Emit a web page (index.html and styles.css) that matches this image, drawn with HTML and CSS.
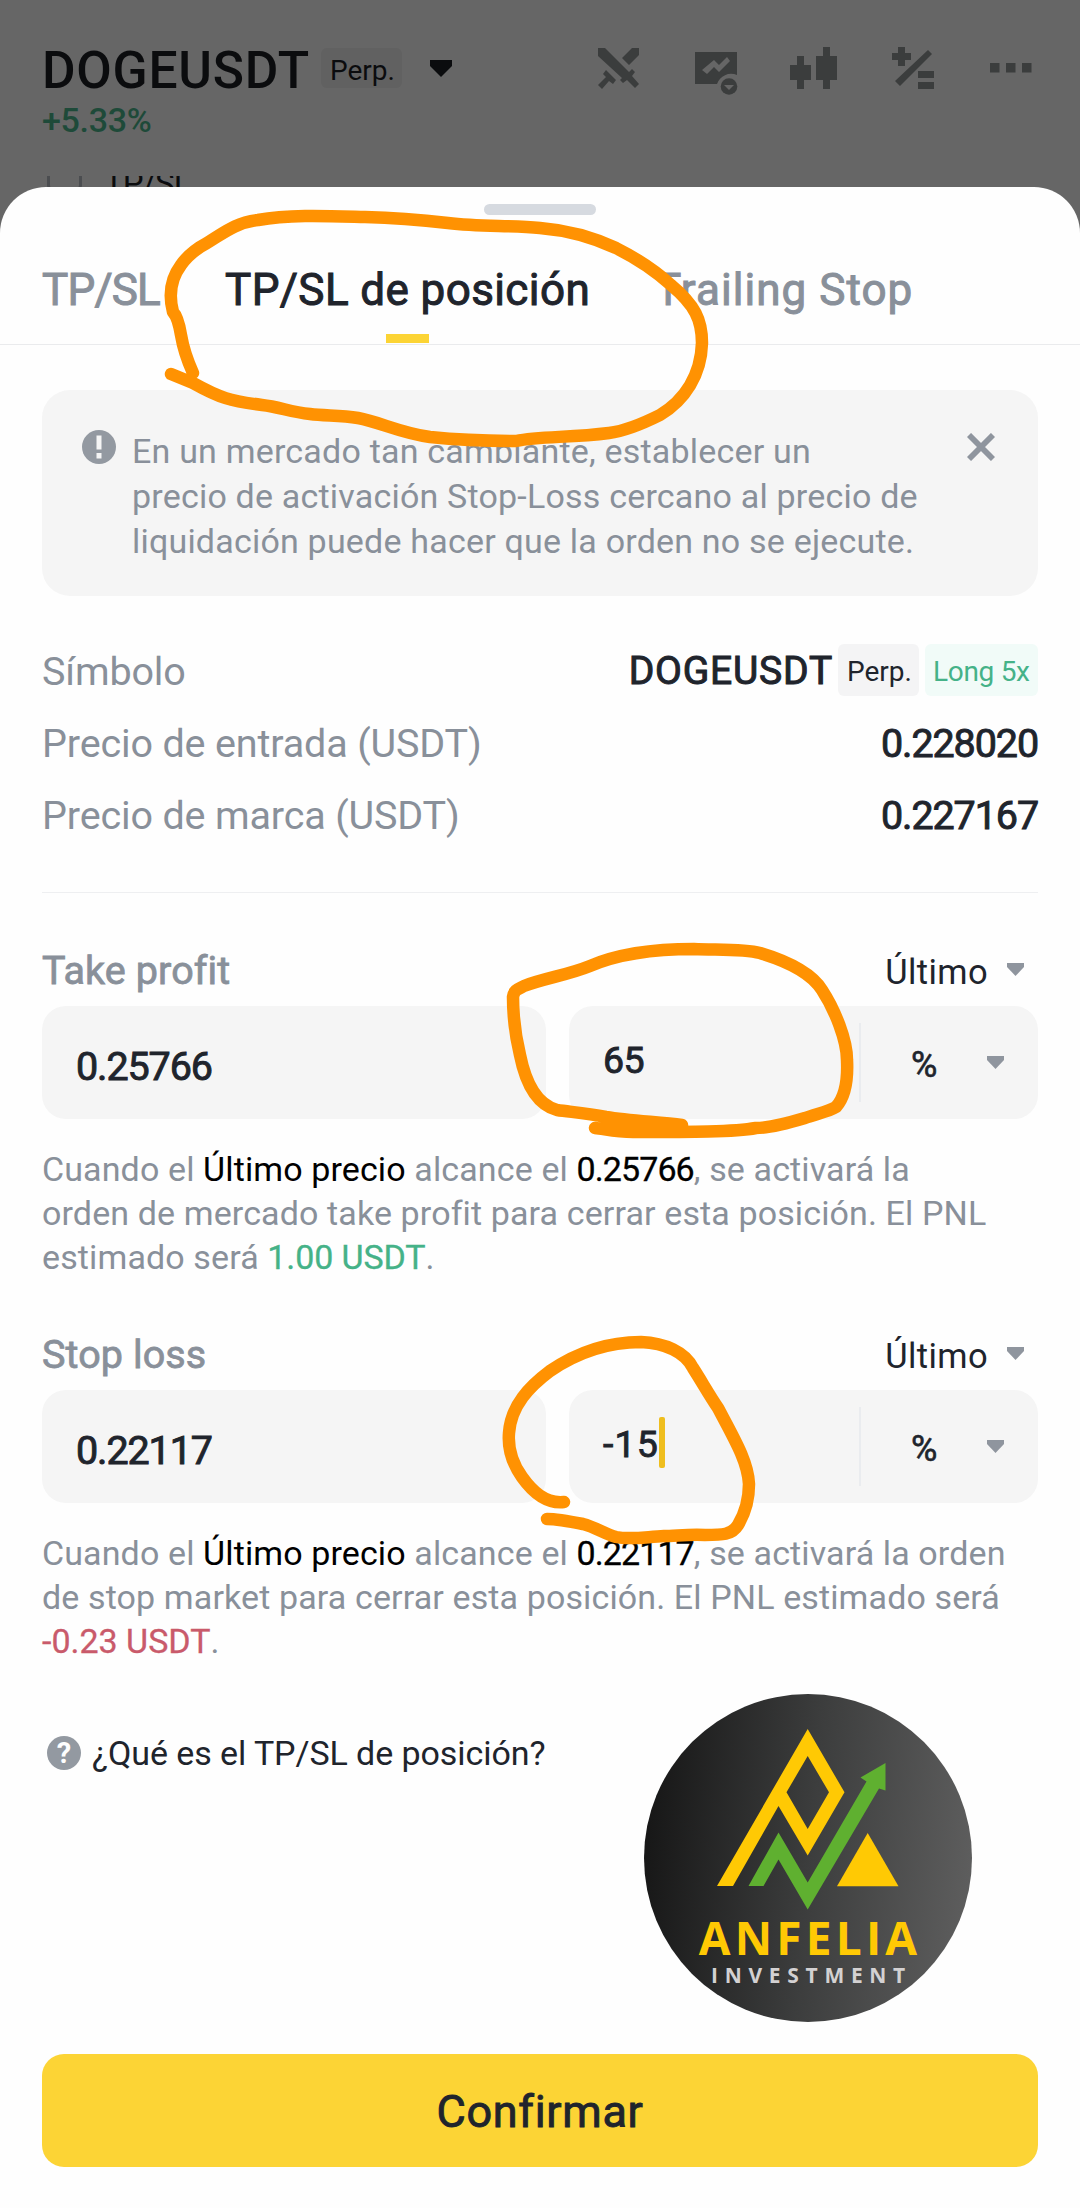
FILE: index.html
```html
<!DOCTYPE html>
<html lang="es">
<head>
  <meta charset="UTF-8">
  <meta name="viewport" content="width=device-width, initial-scale=1.0">
  <title>TP/SL de posición</title>
  <link rel="stylesheet" href="styles.css">
</head>
<body>
  <div class="header">
    <div class="header-row">
      <span class="pair">DOGEUSDT</span>
      <span class="badge badge-dim">Perp.</span>
      <svg class="pair-caret" width="22" height="17" viewBox="0 0 22 17"><path d="M0 0H22V6L11 17L0 6Z" fill="#0b0c0e"/></svg>
      <div class="header-icons">
        <svg width="42" height="44" viewBox="0 0 42 44">
          <g transform="translate(0 2)">
            <path d="M0 0h7L31 24l3-3 3 3-3 4 7 8-4 4-8-8-4 3-3-3 2-2L0 8zM34 0h7v7L31 17l-7-7zM8 22l10 10-3 4-4-3-7 8-4-4 8-8-3-3z"/>
          </g>
        </svg>
        <svg class="icon-chart" width="44" height="44" viewBox="0 0 44 44">
          <path fill-rule="evenodd" d="M1 6h42v23a15 15 0 0 0-20 9H1zM8 24l5 4 7-7 5 5 11-11-3-4-8 8-5-5z"/>
          <circle cx="35" cy="40.500" r="8.300"/>
          <path class="icon-hole" d="M30 39h10l-5 5z"/>
        </svg>
        <svg width="48" height="44" viewBox="0 0 48 44">
          <path d="M8 10h7v9h7v15h-7v9H8v-9H1V19h7zM34 1h7v9h7v24h-7v9h-7v-9h-7V10h7z"/>
        </svg>
        <svg width="44" height="44" viewBox="0 0 44 44">
          <path d="M7 1h7v6h6v7h-6v6H7v-6H1V7h6zM37 4l4 4L9 40l-5-5zM27 25h16v7H27zM27 36h16v7H27z"/>
        </svg>
        <svg width="44" height="44" viewBox="0 0 44 44">
          <path d="M1 17h9.500v9.500H1zM17 17h9.500v9.500H17zM33 17h9.500v9.500H33z"/>
        </svg>
      </div>
    </div>
    <div class="change">+5.33%</div>
    <div class="order-option">
      <span class="checkbox"></span>
      <span class="order-option-text">TP/SL</span>
    </div>
  </div>

  <div class="sheet">
    <div class="handle"></div>
    <div class="tabs">
      <div class="tab">TP/SL</div>
      <div class="tab tab-active">TP/SL de posición</div>
      <div class="tab tab-trailing">Trailing Stop</div>
    </div>

    <div class="content">
      <div class="alert">
        <svg class="alert-icon" width="34" height="34" viewBox="0 0 34 34">
          <circle cx="17" cy="17" r="17" fill="#9399a1"/>
          <path d="M14.500 5.500h5v14h-5zM14.500 23h5v5.500h-5z" fill="#f5f5f5"/>
        </svg>
        <p class="alert-text">En un mercado tan cambiante, establecer un<br>precio de activación Stop-Loss cercano al precio de<br>liquidación puede hacer que la orden no se ejecute.</p>
        <svg class="alert-close" width="28" height="28" viewBox="0 0 28 28"><path d="M2 2L26 26M26 2L2 26" stroke="#8f959e" stroke-width="5.800"/></svg>
      </div>

      <div class="info">
        <div class="info-row">
          <span class="info-label">Símbolo</span>
          <span class="symbol">DOGEUSDT</span>
          <span class="badge badge-perp">Perp.</span>
          <span class="badge badge-long">Long 5x</span>
        </div>
        <div class="info-row">
          <span class="info-label">Precio de entrada (USDT)</span>
          <span class="number">0.228020</span>
        </div>
        <div class="info-row">
          <span class="info-label">Precio de marca (USDT)</span>
          <span class="number">0.227167</span>
        </div>
      </div>

      <div class="order">
        <div class="order-head">
          <span class="order-title">Take profit</span>
          <span class="trigger">Último</span>
          <svg class="caret" width="17" height="13" viewBox="0 0 17 13"><path d="M0 0H17V4L8.500 13L0 4Z"/></svg>
        </div>
        <div class="fields">
          <div class="field"><span class="number">0.25766</span></div>
          <div class="field field-split">
            <span class="percent-value">65</span>
            <div class="unit">
              <span class="unit-sign">%</span>
              <svg class="caret" width="17" height="13" viewBox="0 0 17 13"><path d="M0 0H17V4L8.500 13L0 4Z"/></svg>
            </div>
          </div>
        </div>
        <p class="hint">Cuando el <b>Último precio</b> alcance el <b class="hint-price">0.25766</b>, se activará la<br>orden de mercado take profit para cerrar esta posición. El PNL<br>estimado será <span class="gain">1.00 USDT</span>.</p>
      </div>

      <div class="order">
        <div class="order-head">
          <span class="order-title">Stop loss</span>
          <span class="trigger">Último</span>
          <svg class="caret" width="17" height="13" viewBox="0 0 17 13"><path d="M0 0H17V4L8.500 13L0 4Z"/></svg>
        </div>
        <div class="fields">
          <div class="field"><span class="number">0.22117</span></div>
          <div class="field field-split">
            <span class="percent-value percent-active">-15</span><span class="cursor"></span>
            <div class="unit">
              <span class="unit-sign">%</span>
              <svg class="caret" width="17" height="13" viewBox="0 0 17 13"><path d="M0 0H17V4L8.500 13L0 4Z"/></svg>
            </div>
          </div>
        </div>
        <p class="hint">Cuando el <b>Último precio</b> alcance el <b class="hint-price">0.22117</b>, se activará la orden<br>de stop market para cerrar esta posición. El PNL estimado será<br><span class="loss">-0.23 USDT</span>.</p>
      </div>

      <div class="help">
        <span class="help-icon">?</span>
        <span>¿Qué es el TP/SL de posición?</span>
      </div>

      <div class="confirm">Confirmar</div>
    </div>
  </div>

  <!-- watermark -->
  <div class="brand">
    <svg class="brand-mark" width="328" height="328" viewBox="0 0 328 328">
      <path fill="#ffc904" fill-rule="evenodd" d="M163.700 35L200.500 98.300 163.700 161.500 134.500 112 89 192H73zM163.700 62L142.500 98.300 163.700 135 185 98.300z"/>
      <path fill="#5fb030" d="M104.500 192L134.500 138.500 163.700 188.500 222.500 87.500 216.500 83.500 241.500 69V96.500L235 94.500 163.700 215.500 134.500 165.500 119.500 192z"/>
      <path fill="#ffc904" d="M223.700 139L254.500 192.300H193z"/>
    </svg>
    <div class="brand-name">ANFELIA</div>
    <div class="brand-sub">INVESTMENT</div>
  </div>

  <!-- hand-drawn marks -->
  <svg class="marks" width="1080" height="2208" viewBox="0 0 1080 2208">
    <path d="M193 373Q184 353 181 335T173 312Q166 285 181 265Q190 252 207 243C225 232 235 223 258 220C290 214 330 216 365 217C400 218 430 221 448 223C480 227 510 225 540 228C565 230 590 236 616 248C640 260 660 275 671 285C695 305 702 320 702 343C701 375 685 400 660 415C640 425 625 431 609 433C570 438 540 436 516 441C480 441 450 439 430 437C400 433 380 422 358 418C340 415 325 416 310 414C290 412 280 407 262 405C230 401 220 398 193 383L171 374"/>
    <path d="M682 1125C660 1122 630 1121 606 1117C585 1113 570 1112 557 1110C535 1104 525 1080 520 1055C514 1030 513 1010 513 997C514 990 518 989 524 986C545 978 568 975 590 966C620 953 655 949 694 949C720 950 745 949 760 953C790 962 812 974 822 990C835 1010 847 1040 847 1060C848 1080 845 1097 836 1107C828 1112 815 1114 805 1118C785 1124 770 1128 756 1128C735 1132 690 1132 633 1132C615 1132 605 1129 595 1128"/>
    <path d="M564 1502C545 1504 532 1491 522 1477C510 1460 508 1445 509 1433C511 1405 530 1386 550 1371C575 1354 605 1342 641 1342C665 1343 685 1352 693 1368C702 1382 708 1393 718 1408C735 1440 748 1462 749 1484C749 1500 744 1515 738 1525C732 1535 722 1535 705 1535C690 1534 675 1536 664 1536C645 1537 630 1540 616 1537C605 1534 595 1527 583 1524C568 1521 558 1519 547 1519"/>
  </svg>
</body>
</html>
```
FILE: styles.css
```css
* {
  box-sizing: border-box;
}

body {
  margin: 0;
  width: 1080px;
  height: 2208px;
  position: relative;
  overflow: hidden;
  background-color: #666666;
  font-family: Roboto, sans-serif;
  color: #20242c;
}

p {
  margin: 0;
}

/* dimmed page behind the sheet */
.header {
  height: 187px;
  padding: 42px 47px 0 42px;
  overflow: hidden;
}

.header-row {
  display: flex;
  align-items: center;
  height: 56px;
}

.pair {
  width: 279px;
  font-size: 51.5px;
  font-weight: 500;
  letter-spacing: 0.75px;
  color: #0b0c0e;
}

.badge {
  padding: 0 9px;
  height: 52px;
  line-height: 55px;
  border-radius: 6px;
  background-color: #f4f4f5;
  font-size: 28px;
  white-space: nowrap;
}

.badge-dim {
  width: 81px;
  height: 40px;
  line-height: 45px;
  margin-top: -4px;
  background-color: #616161;
  color: #0b0c0e;
}

.pair-caret {
  margin: -4px 0 0 28px;
}

.header-icons {
  display: flex;
  gap: 54px;
  margin-left: auto;
  margin-top: -4px;
}

.header-icons svg {
  fill: #3b3d3d;
  overflow: visible;
}

.header-icons .icon-chart {
  margin-right: -3px;
}

.header-icons .icon-hole {
  fill: #666666;
}

.change {
  height: 40px;
  margin-top: 2px;
  line-height: 40px;
  font-size: 34px;
  font-weight: 500;
  letter-spacing: -0.3px;
  color: #1e4a39;
}

.order-option {
  display: flex;
  height: 20px;
  margin-top: 36px;
  overflow: hidden;
}

.checkbox {
  width: 35px;
  height: 35px;
  margin: -20px 22px 0 5px;
  border: 3px solid #4b4d50;
  border-radius: 6px;
}

.order-option-text {
  margin-top: -12px;
  line-height: 40px;
  font-size: 33px;
  letter-spacing: -1px;
  color: #0b0c0e;
}

.sheet {
  display: flex;
  flex-direction: column;
  height: 2021px;
  padding-top: 17px;
  border-radius: 46px 46px 0 0;
  background-color: #fefefe;
}

.handle {
  width: 112px;
  height: 11px;
  margin: 0 auto;
  border-radius: 6px;
  background-color: #d6dae0;
}

.tabs {
  display: flex;
  gap: 65px;
  height: 130px;
  padding: 21px 42px 0;
  border-bottom: 1px solid #eaebed;
}

.tab {
  position: relative;
  line-height: 108px;
  font-size: 44px;
  letter-spacing: -0.8px;
  color: #89909a;
  -webkit-text-stroke: 1px currentColor;
}

.tab-active {
  letter-spacing: 0.4px;
  color: #20242c;
}

.tab-trailing {
  letter-spacing: 1.05px;
}

.tab-active::after {
  content: "";
  position: absolute;
  left: 50%;
  bottom: 1px;
  width: 43px;
  height: 9px;
  margin-left: -22px;
  background-color: #fcd435;
}

.content {
  display: flex;
  flex: 1;
  flex-direction: column;
  padding: 0 42px 41px;
}

.alert {
  display: flex;
  height: 206px;
  margin-top: 45px;
  padding: 39px 43px 0 40px;
  border-radius: 28px;
  background-color: #f5f5f5;
}

.alert-icon {
  margin: 1px 16px 0 0;
}

.alert-text {
  flex: 1;
  line-height: 45px;
  font-size: 34px;
  letter-spacing: 0.2px;
  white-space: nowrap;
  color: #89909a;
}

.alert-close {
  margin-top: 4px;
}

.info {
  margin-top: 39px;
  padding-bottom: 41px;
  border-bottom: 1px solid #eeeff1;
}

.info-row {
  display: flex;
  align-items: center;
  height: 72px;
}

.info-label {
  flex: 1;
  font-size: 39.5px;
  letter-spacing: -0.15px;
  color: #89909a;
}

.symbol {
  margin: -1px 5px 0 0;
  font-size: 39px;
  letter-spacing: 0.8px;
  -webkit-text-stroke: 1px currentColor;
}

.badge-perp {
  width: 81px;
  margin-top: -3px;
}

.badge-long {
  width: 113px;
  margin: -3px 0 0 6px;
  padding: 0 8px;
  background-color: #f1fbf8;
  letter-spacing: -0.3px;
  color: #45b288;
}

.number {
  font-size: 39.5px;
  letter-spacing: -1.1px;
  -webkit-text-stroke: 0.9px currentColor;
}

.order {
  margin-top: 42px;
}

.order + .order {
  margin-top: 40px;
}

.order-head {
  display: flex;
  align-items: center;
  height: 71px;
}

.order-title {
  flex: 1;
  font-size: 39.5px;
  letter-spacing: 0.1px;
  color: #89909a;
  -webkit-text-stroke: 0.8px currentColor;
}

.trigger {
  padding-top: 2px;
  font-size: 34.5px;
  letter-spacing: 0.4px;
}

.caret {
  fill: #8f959e;
}

.order-head .caret {
  margin: -2px 14px 0 19px;
}

.fields {
  display: grid;
  grid-template-columns: 504px 469px;
  gap: 23px;
}

.field {
  display: flex;
  align-items: center;
  height: 113px;
  padding: 7px 0 0 34px;
  border-radius: 24px;
  background-color: #f5f5f5;
}

.field-split {
  padding-top: 0;
}

.percent-value {
  margin-top: -5px;
  font-size: 37.5px;
  letter-spacing: -0.5px;
  -webkit-text-stroke: 0.9px currentColor;
}

.percent-active {
  letter-spacing: 1.2px;
}

.cursor {
  width: 6px;
  height: 51px;
  margin-top: -8px;
  border-radius: 2px;
  background-color: #efbe1e;
}

.unit {
  display: flex;
  align-items: center;
  width: 179px;
  height: 79px;
  margin-left: auto;
  padding: 5px 34px 0 50px;
  border-left: 2px solid #eaecef;
}

.unit-sign {
  font-size: 36px;
  -webkit-text-stroke: 0.6px currentColor;
}

.unit .caret {
  margin: -6px 0 0 auto;
}

.hint {
  margin-top: 28px;
  line-height: 44px;
  font-size: 34px;
  letter-spacing: 0.12px;
  white-space: nowrap;
  color: #89909a;
}

.hint b {
  font-weight: 400;
  color: #000000;
}

.hint .hint-price {
  letter-spacing: -0.9px;
  -webkit-text-stroke: 0.3px currentColor;
}

.gain {
  letter-spacing: -0.1px;
  color: #45b288;
  -webkit-text-stroke: 0.3px currentColor;
}

.loss {
  letter-spacing: 0;
  color: #c95a6b;
  -webkit-text-stroke: 0.3px currentColor;
}

.help {
  display: flex;
  align-items: center;
  gap: 11px;
  height: 40px;
  margin-top: 70px;
  padding-left: 5px;
  font-size: 34px;
  letter-spacing: -0.08px;
}

.help-icon {
  width: 34px;
  height: 34px;
  border-radius: 50%;
  background-color: #9399a1;
  color: #fefefe;
  font-size: 29px;
  font-weight: 700;
  line-height: 35px;
  text-align: center;
}

.confirm {
  height: 113px;
  margin-top: auto;
  border-radius: 22px;
  background-color: #fcd435;
  font-size: 45px;
  letter-spacing: 0.7px;
  line-height: 115px;
  text-align: center;
  -webkit-text-stroke: 0.9px currentColor;
}

.brand {
  position: absolute;
  left: 644px;
  top: 1694px;
  width: 328px;
  height: 328px;
  border-radius: 50%;
  background: linear-gradient(95deg, #141414, #3c3d3d 50%, #606060);
  font-family: "Open Sans", sans-serif;
  text-align: center;
}

.brand-mark {
  display: block;
  margin-bottom: -106px;
}

.brand-name {
  height: 47px;
  line-height: 42px;
  padding-left: 4px;
  font-size: 46px;
  font-weight: 700;
  letter-spacing: 4.2px;
  color: #ffc904;
}

.brand-sub {
  line-height: 24px;
  padding-left: 7px;
  font-size: 21px;
  font-weight: 700;
  letter-spacing: 6.7px;
  color: #d3d1d2;
}

.marks {
  position: absolute;
  left: 0;
  top: 0;
  fill: none;
  stroke: #ff9202;
  stroke-width: 12.5;
  stroke-linecap: round;
  stroke-linejoin: round;
}
```
